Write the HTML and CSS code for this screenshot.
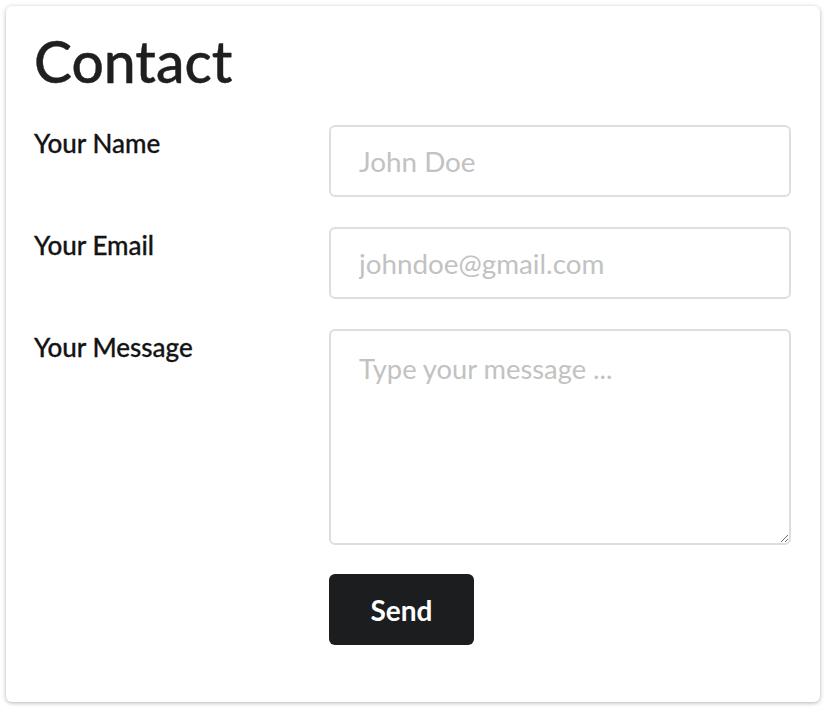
FILE: index.html
```html
<!DOCTYPE html>
<html lang="en">
<head>
<meta charset="utf-8">
<title>Contact</title>
<link rel="stylesheet" href="styles.css">
</head>
<body>
<form class="card">
  <h1 class="title">Contact</h1>
  <div class="row">
    <label class="label" for="name">Your Name</label>
    <input class="field" id="name" type="text" placeholder="John Doe">
  </div>
  <div class="row">
    <label class="label" for="email">Your Email</label>
    <input class="field" id="email" type="email" placeholder="johndoe@gmail.com">
  </div>
  <div class="row">
    <label class="label" for="msg">Your Message</label>
    <textarea class="field area" id="msg" placeholder="Type your message ..."></textarea>
  </div>
  <div class="row">
    <span></span>
    <div><button class="send" type="button">Send</button></div>
  </div>
</form>
</body>
</html>
```

FILE: styles.css
```css
html, body {
  margin: 0;
  background: #ffffff;
}
body {
  padding: 6px 8px 6px 6px;
  font-family: Lato, "Open Sans", sans-serif;
}
.card {
  box-sizing: border-box;
  height: 696px;
  background: #fff;
  border-radius: 6px;
  box-shadow: 0 1px 4px rgba(0, 0, 0, 0.3);
  padding: 21px 29px 0 28px;
  display: flex;
  flex-direction: column;
  gap: 30px;
}
.title {
  margin: 0;
  font-size: 57px;
  font-weight: 500;
  line-height: 1.2;
  color: #1f1f1f;
  -webkit-text-stroke: 0.4px #1f1f1f;
}
.row {
  display: grid;
  grid-template-columns: 295px 1fr;
}
.label {
  padding-top: 3px;
  font-size: 26px;
  font-weight: 500;
  line-height: 1.2;
  color: #141414;
  -webkit-text-stroke: 0.3px #141414;
}
.field {
  box-sizing: border-box;
  width: 100%;
  height: 72px;
  border: 2px solid #dedede;
  border-radius: 6px;
  padding: 0 28px;
  font-family: Lato, sans-serif;
  font-size: 27.8px;
  color: #333;
  background: #fff;
  outline: none;
}
.field::placeholder {
  color: #c2c2c2;
}
.area {
  display: block;
  height: 216px;
  padding-top: 21px;
  font-size: 27.3px;
  resize: vertical;
}
.send {
  width: 145px;
  height: 71px;
  margin-top: -1px;
  border: none;
  border-radius: 6px;
  background: #1c1d1f;
  color: #fff;
  font-family: Lato, sans-serif;
  font-weight: 700;
  font-size: 28px;
}
```
